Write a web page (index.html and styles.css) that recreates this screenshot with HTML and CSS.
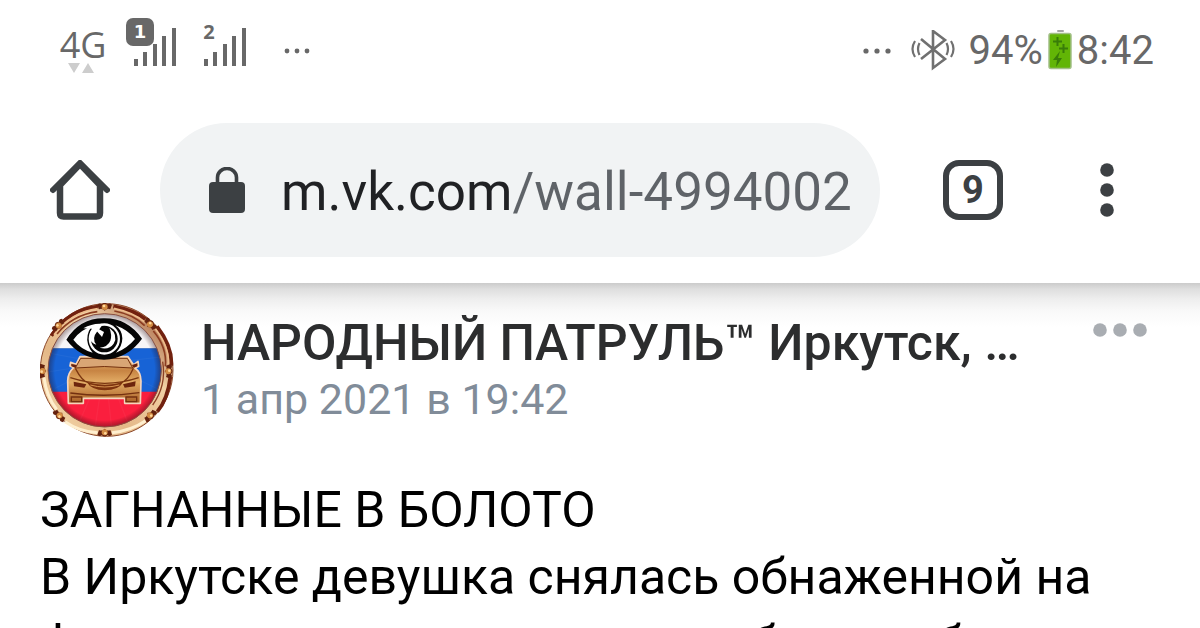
FILE: index.html
```html
<!DOCTYPE html>
<html lang="ru">
<head>
<meta charset="utf-8">
<meta name="viewport" content="width=device-width, initial-scale=1">
<title>НАРОДНЫЙ ПАТРУЛЬ™ Иркутск</title>
<link rel="stylesheet" href="styles.css">
</head>
<body>
<header class="chrome">
  <div class="status">
    <div class="status-group">
      <div class="network">
        <span class="network-type">4G</span>
        <svg class="arrows" width="28" height="12" viewBox="0 0 28 12" aria-hidden="true"><path d="M1 1h12L7 11zM15 11h12L21 1z" fill="#cdcdcd"/></svg>
      </div>
      <div class="sim">
        <svg width="42" height="38" viewBox="0 0 42 38" aria-hidden="true"><path d="M0 31h4v7H0zM9 24h4v14H9zM19 16h4v22h-4zM28 8h4v30h-4zM38 0h4v38h-4z" fill="#686868"/></svg>
        <span class="sim-badge">1</span>
      </div>
      <div class="sim">
        <svg width="42" height="38" viewBox="0 0 42 38" aria-hidden="true"><path d="M0 31h4v7H0zM9 24h4v14H9zM19 16h4v22h-4zM28 8h4v30h-4zM38 0h4v38h-4z" fill="#686868"/></svg>
        <span class="sim-number">2</span>
      </div>
      <svg class="dots-left" width="26" height="6" viewBox="0 0 26 6" aria-hidden="true"><g fill="#686868"><circle cx="3" cy="3" r="2.4"/><circle cx="13" cy="3" r="2.4"/><circle cx="23" cy="3" r="2.4"/></g></svg>
    </div>
    <div class="status-group status-right">
      <svg class="dots-right" width="28" height="6" viewBox="0 0 28 6" aria-hidden="true"><g fill="#686868"><circle cx="3" cy="3" r="2.6"/><circle cx="14" cy="3" r="2.6"/><circle cx="25" cy="3" r="2.6"/></g></svg>
      <svg class="bluetooth" width="44" height="42" viewBox="0 0 44 42" fill="none" stroke="#707070" stroke-width="2.6" aria-hidden="true"><path d="M10 9l24 20-12 9V1l12 9L10 29"/><path d="M8.500 13q-3 6 0 12M35.500 13q3 6 0 12M4 11q-5 8 0 16M40 11q5 8 0 16" stroke-width="2.2"/></svg>
      <span class="battery-level">94%</span>
      <svg class="battery" width="24" height="42" viewBox="0 0 24 42" aria-hidden="true"><rect x="9" y="0" width="7" height="2" rx="1" fill="#a4a4a4"/><rect x="1" y="3.500" width="22" height="35" rx="2" fill="#62b506" stroke="#a3bf88" stroke-width="1.500"/><path d="M5 11.500h9M9.500 7v9M11 18.500h9M15.500 14v9" stroke="#397d08" stroke-width="2"/><path d="M12 21l-7 9h4l-1 7 6-9h-4z" fill="#397d08"/></svg>
      <span class="clock">8:42</span>
    </div>
  </div>
  <div class="toolbar">
    <button class="icon-button" type="button" aria-label="Главная">
      <svg width="60" height="60" viewBox="0 0 60 60" aria-hidden="true"><path d="M3 30L30 3l27 27" fill="none" stroke="#3c4043" stroke-width="6" stroke-linecap="round" stroke-linejoin="round"/><path d="M10 25v28q0 3.500 3.500 3.500h33q3.500 0 3.500-3.500V25L30 4z" fill="#fff" stroke="#3c4043" stroke-width="6.500" stroke-linejoin="round"/></svg>
    </button>
    <label class="omnibox">
      <svg width="36" height="47" viewBox="0 0 36 47" aria-hidden="true"><path d="M8.500 18v-7.500a9.500 9 0 0 1 19 0V18" fill="none" stroke="#3c4043" stroke-width="3.600"/><rect y="15" width="36" height="31" rx="4" fill="#3c4043"/></svg>
      <input class="url" type="text" value="m.vk.com/wall-4994002" aria-label="Адрес страницы" spellcheck="false">
    </label>
    <button class="tabs" type="button" aria-label="Открытые вкладки">9</button>
    <button class="icon-button" type="button" aria-label="Меню">
      <svg width="14" height="54" viewBox="0 0 14 54" aria-hidden="true"><g fill="#3c4043"><circle cx="7" cy="7" r="6.800"/><circle cx="7" cy="27" r="6.800"/><circle cx="7" cy="47" r="6.800"/></g></svg>
    </button>
  </div>
</header>
<main class="page">
  <article class="post">
    <div class="post-header">
      <svg class="avatar" viewBox="30 24 402 402" role="img" aria-label="Народный патруль">
        <defs>
          <linearGradient id="ring" x1="0" y1="1" x2="1" y2="0"><stop offset="0" stop-color="#f8dcb0"/><stop offset=".35" stop-color="#e4b888"/><stop offset=".65" stop-color="#f1d0a4"/><stop offset="1" stop-color="#8a3d22"/></linearGradient>
          <linearGradient id="gold" x1="0" y1="0" x2="0" y2="1"><stop offset="0" stop-color="#e5b879"/><stop offset=".3" stop-color="#c78443"/><stop offset=".55" stop-color="#e3ad66"/><stop offset="1" stop-color="#a75c24"/></linearGradient>
          <radialGradient id="shade"><stop offset=".88" stop-color="#200" stop-opacity="0"/><stop offset="1" stop-color="#301010" stop-opacity=".4"/></radialGradient>
          <clipPath id="disc"><circle cx="224" cy="226" r="170"/></clipPath>
          <g id="stud"><path d="M-22-7Q-14-14-9-8Q0-17 9-8Q15-14 22-7L17 7Q8 2 0 11Q-8 2-17 7z" fill="#64220f"/><circle r="9" fill="#d28b43"/><circle cx="-2" cy="-3" r="4" fill="#ffd89b"/></g>
        </defs>
        <circle cx="230" cy="225" r="199" fill="url(#ring)" stroke="#8d4a2c" stroke-width="3"/>
        <path d="M64 122Q118 42 205 35M250 34Q313 46 346 72M381 94Q428 155 424 212M421 246Q413 313 382 350" fill="none" stroke="#71210f" stroke-width="11"/>
        <path d="M81 117Q128 60 202 50M253 48Q310 58 344 92M370 108Q412 158 406 214" fill="none" stroke="#8c3c20" stroke-width="5"/>
        <path d="M72 119Q124 51 203 41M252 40Q312 53 345 82M376 101Q419 157 415 209" fill="none" stroke="#efbd8c" stroke-width="5"/>
        <path d="M42 247Q49 304 80 343M105 380Q150 411 203 413M246 413Q305 406 347 377" fill="none" stroke="#ffefcf" stroke-width="9"/>
        <path d="M398 200Q410 272 368 330" fill="none" stroke="#8b4024" stroke-width="4"/>
        <g clip-path="url(#disc)">
          <path d="M50 50h350v110H50z" fill="#f7f5f7"/><path d="M50 160h350v131H50z" fill="#1763d6"/><path d="M50 290h350v110H50z" fill="#fa1f3e"/>
          <path d="M224 205L60 175M224 205L60 230M224 205L75 280M224 205L140 400M224 205L195 400M224 205L245 400M224 205L300 400M224 205L390 285M224 205L400 185" stroke="#fff" stroke-opacity=".04" stroke-width="4"/>
        </g>
        <circle cx="224" cy="226" r="170" fill="url(#shade)"/>
        <circle cx="224" cy="226" r="170" fill="none" stroke="#8b4f40" stroke-width="3"/>
        <use href="#stud" x="224" y="36"/><use href="#stud" transform="translate(360 88) rotate(45)"/><use href="#stud" transform="translate(415 229) rotate(90)"/><use href="#stud" transform="translate(360 361) rotate(135)"/><use href="#stud" transform="translate(224 412) rotate(180)"/><use href="#stud" transform="translate(89 361) rotate(225)"/><use href="#stud" transform="translate(38 228) rotate(270)"/><use href="#stud" transform="translate(86 92) rotate(315)"/>
        <path d="M150 185L294 185L311 210L324 199L326 214L315 220Q332 230 333 258L331 325H284V310H160V325H115L113 257Q114 233 131 218L120 213L122 202L138 208z" fill="url(#gold)" stroke="#f5d5bd" stroke-width="5" stroke-linejoin="round"/>
        <path d="M152 190H292L308 219Q224 210 136 219z" fill="#d9a675" stroke="#74310f" stroke-width="3"/>
        <path d="M124 207l16 3-4 8-12-4zM322 205l-16 5 5 8 11-4z" fill="#67220f"/>
        <path d="M121 248Q225 282 326 248M136 220Q157 260 175 263M310 220Q294 258 270 265" fill="none" stroke="#7b3610" stroke-width="4"/>
        <path d="M131 260l38 8-6 10-31-4zM317 259l-38 9 5 10 31-4z" fill="#6d250d"/>
        <path d="M170 261Q225 277 280 261Q266 286 224 286Q184 285 170 261z" fill="#7d330e"/><path d="M181 270Q224 282 268 270" stroke="#d69450" stroke-width="3" fill="none"/>
        <path d="M121 294Q224 308 328 293M124 306h31v14h-31zM288 306h32v14h-32z" stroke="#733010" stroke-width="4" fill="none"/>
        <path d="M109 134Q150 69 222 70Q292 69 336 131Q294 190 222 194Q151 190 109 134z" fill="#050505"/>
        <path d="M130 134Q151 105 185 94Q166 121 174 148Q178 162 188 173Q151 162 130 134zM256 91Q293 104 315 132Q292 160 258 173Q277 154 277 130Q277 106 256 91z" fill="#fff"/>
        <circle cx="223" cy="132" r="47" fill="#fff"/><circle cx="223" cy="132" r="40" fill="#050505"/>
        <path d="M160 100Q190 83 219 87L208 103L201 110Q184 130 199 149Q183 145 179 130Q176 113 186 101z" fill="#fff"/>
        <path d="M198 106L216 126L222 111L206 102z" fill="#fff"/>
        <path d="M238 98Q266 120 251 146Q237 166 209 158Q234 155 241 137Q247 120 238 98z" fill="#fff"/>
      </svg>
      <div class="post-meta">
        <h1 class="author"><a href="#">НАРОДНЫЙ ПАТРУЛЬ™ Иркутск, …</a></h1>
        <a class="date" href="#">1 апр 2021 в 19:42</a>
      </div>
      <button class="icon-button more" type="button" aria-label="Действия">
        <svg width="54" height="14" viewBox="0 0 54 14" aria-hidden="true"><g fill="#a9adb2"><circle cx="7" cy="7" r="6.800"/><circle cx="27" cy="7" r="6.800"/><circle cx="47" cy="7" r="6.800"/></g></svg>
      </button>
    </div>
    <p class="text">ЗАГНАННЫЕ В БОЛОТО<br>В Иркутске девушка снялась обнаженной на<br>фоне знаменитых храмов, чтобы им об</p>
  </article>
</main>
</body>
</html>
```
FILE: styles.css
```css
* { box-sizing: border-box; }
html, body { height: 100%; }
body {
  margin: 0;
  display: flex;
  flex-direction: column;
  overflow: hidden;
  background: #fff;
  color: #000;
  font-family: Roboto, sans-serif;
}
svg { display: block; flex: none; }
a { color: inherit; text-decoration: none; }
button { padding: 0; border: 0; background: none; color: inherit; font: inherit; cursor: pointer; }

.chrome { flex: none; background: #fff; }
.status {
  display: flex;
  justify-content: space-between;
  height: 97px;
  padding: 0 46px 0 60px;
  color: #686868;
}
.status-group { display: flex; align-items: flex-start; padding-top: 28px; }
.status-right { align-items: center; height: 74px; }
.network { display: flex; flex-direction: column; align-items: center; width: 46px; }
.network-type { font: 36px/34px "Open Sans", sans-serif; }
.arrows { margin-right: 4px; }
.sim { position: relative; margin-left: 28px; }
.sim-badge, .sim-number {
  position: absolute;
  top: -10px;
  left: -8px;
  width: 28px;
  text-align: center;
}
.sim-badge {
  background: #686868;
  border-radius: 7px;
  color: #fff;
  font: bold 18px/28px "DejaVu Sans", sans-serif;
}
.sim-number { font: bold 20px/28px "Noto Sans", sans-serif; left: -9px; }
.dots-left { margin: 20px 0 0 38px; }
.dots-right { margin-right: 20px; }
.bluetooth { margin-right: 14px; }
.battery-level, .clock { font-size: 40px; line-height: 46px; }
.battery { margin: 0 5px; }

.toolbar {
  display: flex;
  align-items: center;
  padding: 26px 86px 26px 50px;
}
.icon-button { flex: none; }
.omnibox {
  display: flex;
  align-items: center;
  flex: 1;
  min-width: 0;
  gap: 36px;
  height: 134px;
  margin: 0 63px 0 50px;
  padding: 0 20px 0 49px;
  border-radius: 67px;
  background: #f1f3f4;
}
.url {
  flex: 1;
  min-width: 0;
  height: 80px;
  padding: 4px 0 0;
  border: 0;
  outline: 0;
  font: 53px Roboto, sans-serif;
  color: #5f6368;
  background: linear-gradient(to right, #202124 231px, #5f6368 231px);
  background-clip: text;
  -webkit-background-clip: text;
  -webkit-text-fill-color: transparent;
}
.tabs {
  flex: none;
  width: 60px;
  height: 60px;
  margin-right: 97px;
  border: 6px solid #3c4043;
  border-radius: 16px;
  color: #3c4043;
  font: bold 38px/48px Roboto, sans-serif;
}

.page {
  flex: 1;
  min-height: 0;
  overflow: hidden;
  padding: 20px 53px 0 40px;
  background: linear-gradient(to bottom, #cbcbcb 0, #dedede 6px, #eeeeee 16px, #f9f9f9 28px, #ffffff 44px);
}
.post-header { display: flex; align-items: flex-start; }
.avatar { width: 134px; height: 134px; }
.post-meta { flex: 1; min-width: 0; padding: 12px 28px 0 27px; }
.author {
  margin: 0;
  overflow: hidden;
  color: #2c2d2e;
  font-size: 50px;
  font-weight: 500;
  line-height: 56px;
  white-space: nowrap;
}
.date { display: block; color: #818c99; font-size: 43px; line-height: 56px; }
.more { margin-top: 20px; }
.text { margin: 40px 0 0; font-size: 50px; line-height: 67px; white-space: nowrap; }
```
